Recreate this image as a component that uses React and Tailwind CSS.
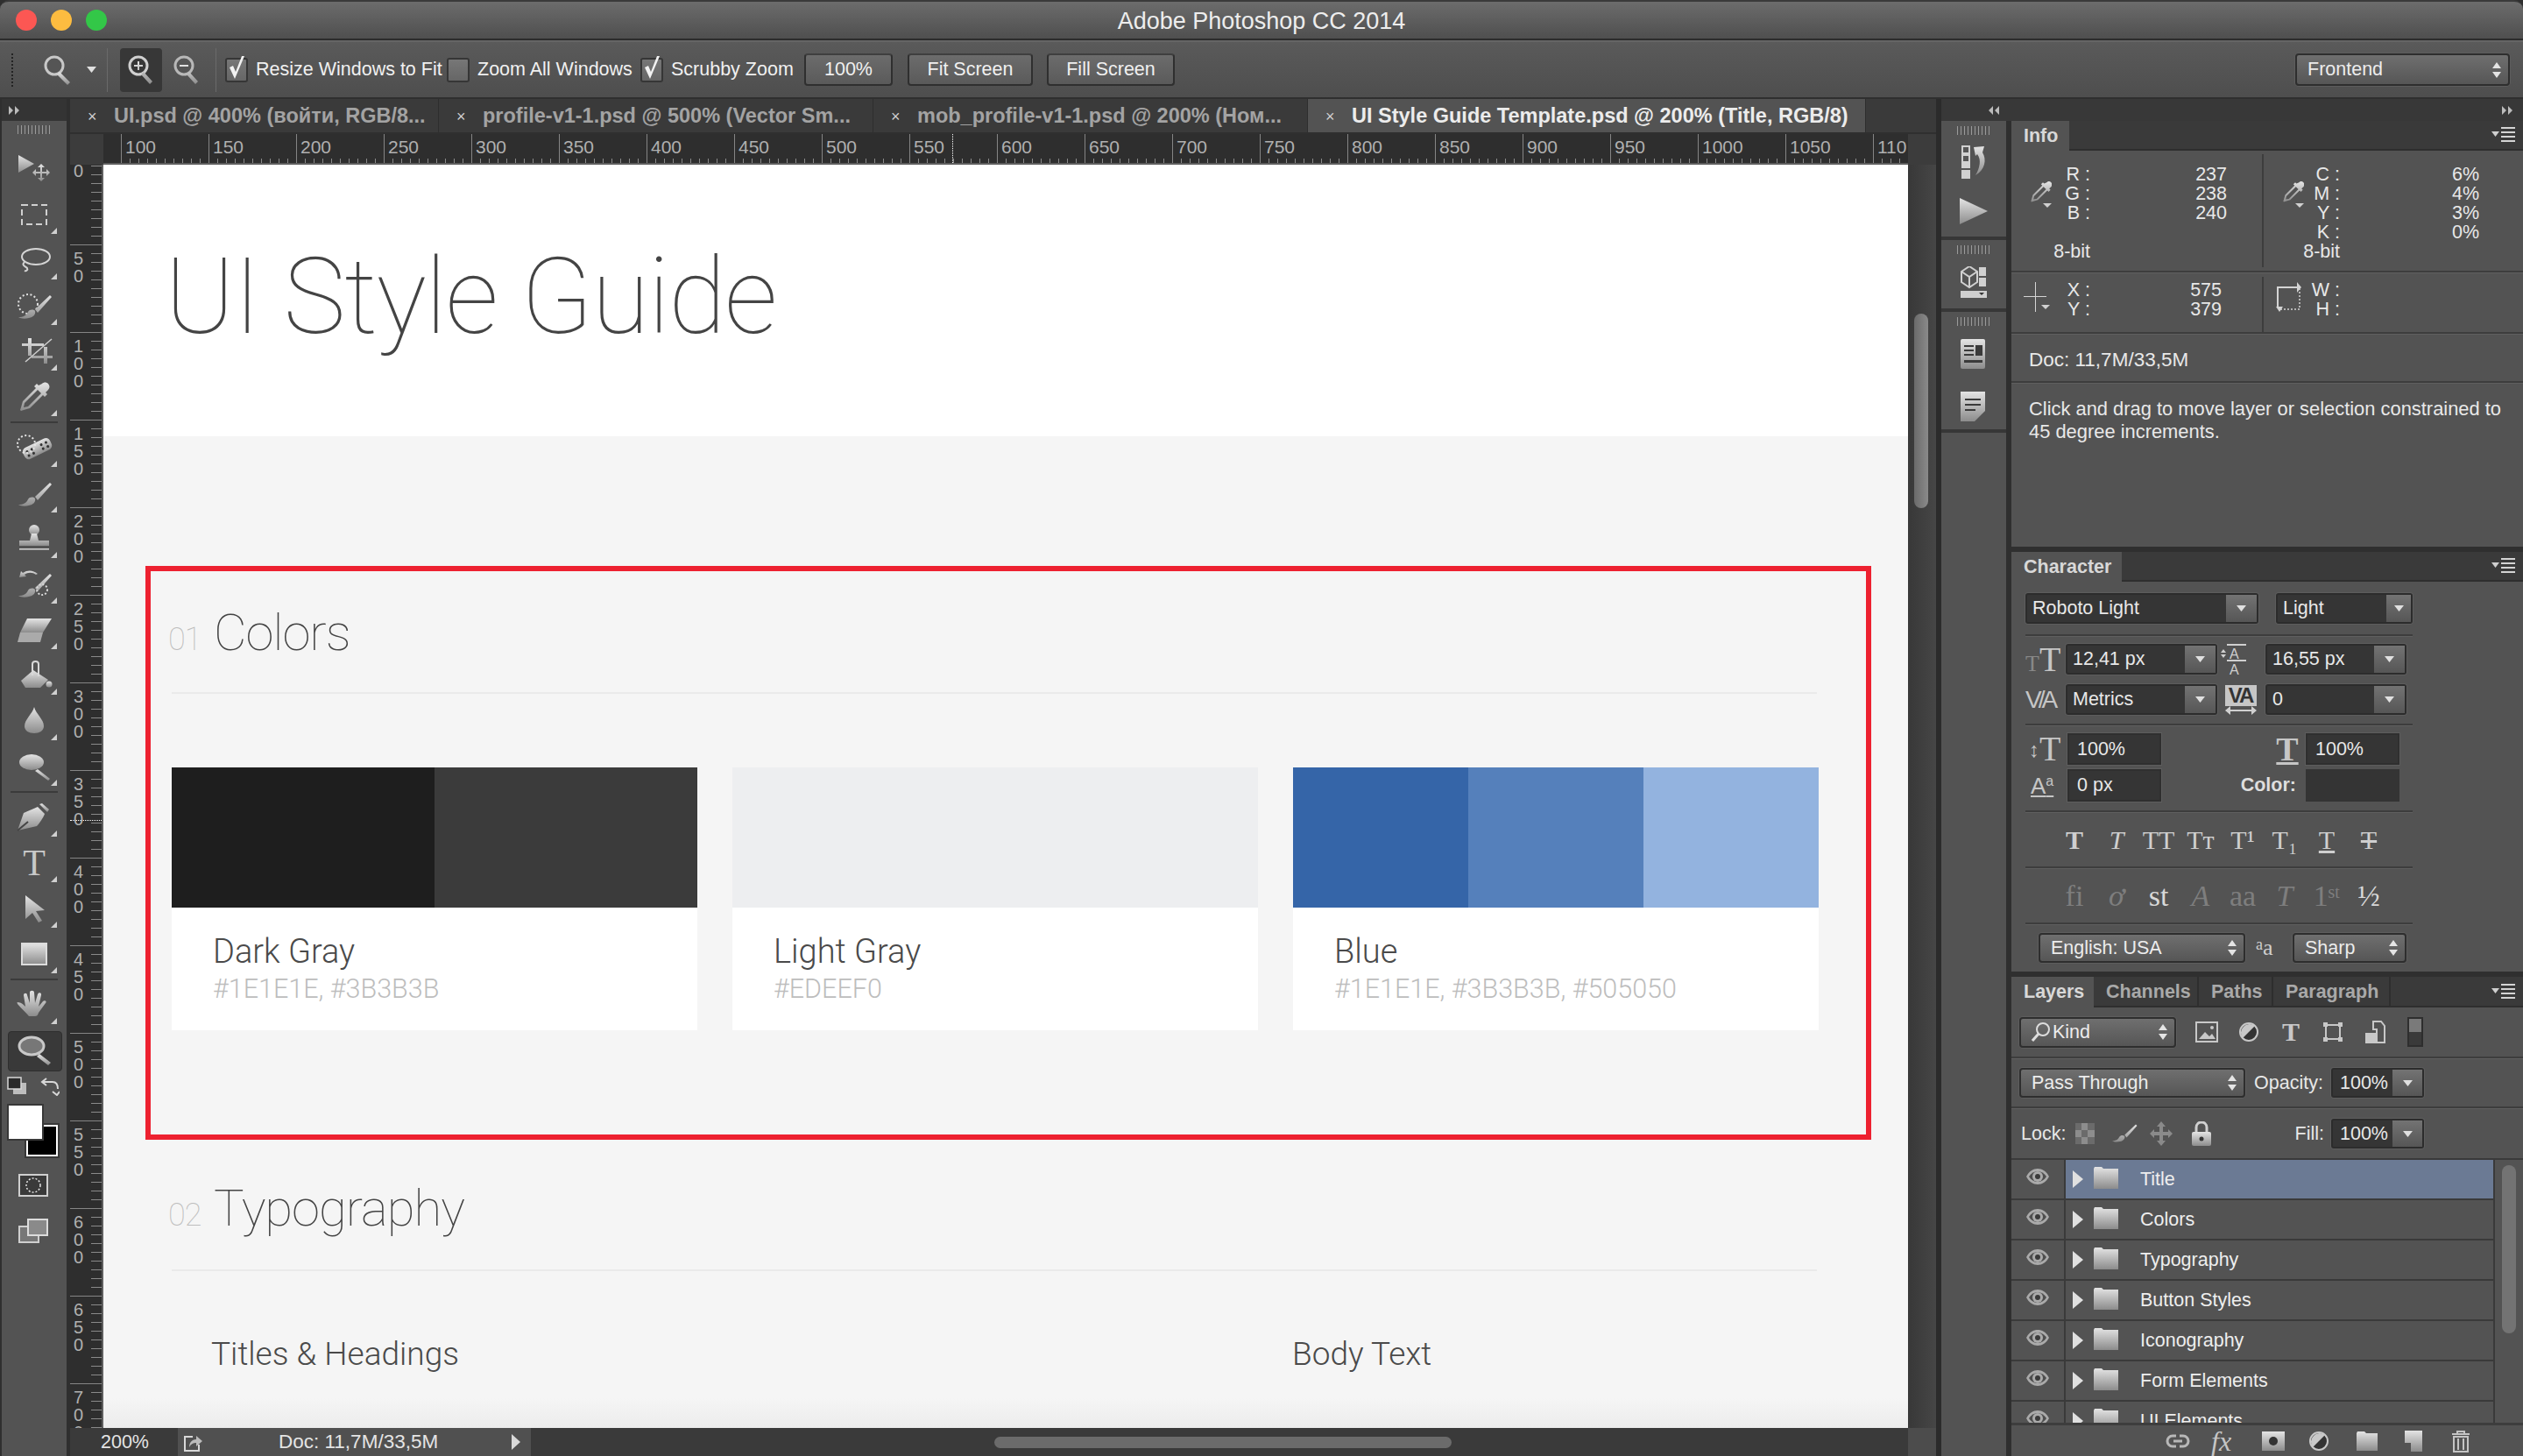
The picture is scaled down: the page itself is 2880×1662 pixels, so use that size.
const ui = "font-['Liberation_Sans',Arial,sans-serif]";
const thin = "font-['Roboto','Liberation_Sans',sans-serif] font-thin";
const light = "font-['Roboto','Liberation_Sans',sans-serif] font-light";

const Caret = ({ className = '' }) => (
  <svg width="11" height="7" viewBox="0 0 11 7" className={className}><path d="M0 0h11L5.500 7z" fill="#e0e0e0" /></svg>
);

const UpDown = () => (
  <svg width="10" height="18" viewBox="0 0 10 18" className="shrink-0"><path d="M5 0l5 7H0zM5 18l5-7H0z" fill="#e4e4e4" /></svg>
);

const Line = ({ className = '' }) => <div className={`h-[3px] shrink-0 border-t-2 border-[#3d3d3d] border-b border-b-[#5f5f5f] ${className}`} />;

// dark field with the small gray dropdown on its right
const Combo = ({ w, drop = 35, h = 'h-[35px]', text, pl = 'pl-[6px]' }) => (
  <div className={`${h} flex shrink-0 border-2 border-[#2c2c2c] rounded-[3px] bg-[#353535] shadow-[0_0_0_1px_#5d5d5d]`} style={{ width: w }}>
    <div className={`flex-1 flex items-center ${pl} text-[21.500px] text-[#e8e8e8]`}>{text}</div>
    <div className="flex items-center justify-center bg-linear-to-b from-[#737373] to-[#565656]" style={{ width: drop }}><Caret /></div>
  </div>
);

const Field = ({ text, w = 107, h = 'h-[36px]' }) => (
  <div className={`${h} shrink-0 flex items-center pl-[9px] bg-[#353535] border-2 border-[#2f2f2f] text-[21.500px] text-[#e8e8e8] shadow-[0_0_0_1px_#5d5d5d]`} style={{ width: w }}>{text}</div>
);

const Picker = ({ w, children, h = 'h-[34px]' }) => (
  <div className={`${h} flex items-center justify-between shrink-0 pl-[12px] pr-[8px] rounded-[4px] border-2 border-[#2e2e2e] bg-linear-to-b from-[#6f6f6f] to-[#565656] text-[21.500px] text-[#ececec] shadow-[0_0_0_1px_#5d5d5d]`} style={{ width: w }}>
    {children}
    <UpDown />
  </div>
);

const PanelMenu = () => (
  <svg width="28" height="20" viewBox="0 0 28 20" className="ml-auto mr-[8px] shrink-0">
    <path d="M0 6h9L4.500 12z" fill="#cfcfcf" />
    <path d="M11 1h16v2H11zM11 6h16v2H11zM11 11h16v2H11zM11 16h16v2H11z" fill="#d4d4d4" />
  </svg>
);

const Ic = ({ w = 44, h = 36, children, className = '' }) => (
  <svg width={w} height={h} viewBox={`0 0 ${w} ${h}`} className={`shrink-0 ${className}`} fill="url(#ig)">{children}</svg>
);

const brush = 'M4 31c6 0 9-2 11-6 2-3 6-3 8-1 1 4-2 7-7 8-4 1-9 1-12-1zM23 22L40 6l2 2-16 18z';
const dropper = 'M31 3c2-2 5-2 7 0s2 5 0 7l-3 3 2 2-3 3-2-2L17 31l-7 2-3 1-1-1 1-3 2-7L24 8l-2-2 3-3 2 2zM26 10L11 25l-1 5 5-1 15-15z';

const toolIcons = {
  move: <Ic><path d="M4 2v20l18-10z" /><path d="M30 12l4 4h-3v5h5v-3l4 4-4 4v-3h-5v5h3l-4 4-4-4h3v-5h-5v3l-4-4 4-4v3h5v-5h-3z" /></Ic>,
  marquee: <Ic><rect x="8" y="7" width="28" height="22" fill="none" stroke="#d0d0d0" strokeWidth="2" strokeDasharray="7 4" /></Ic>,
  lasso: <Ic><ellipse cx="24" cy="14" rx="16" ry="9" fill="none" stroke="#d4d4d4" strokeWidth="2" /><path d="M11 20c-4 4 1 5 3 7 1 2-1 4-3 3" fill="none" stroke="#d4d4d4" strokeWidth="2" /></Ic>,
  quick: <Ic><circle cx="15" cy="16" r="11" fill="none" stroke="#e0e0e0" strokeWidth="2" strokeDasharray="2 2.500" /><path d={brush} /></Ic>,
  crop: <Ic><path d="M8 9h7V3h4v6h14v3h-14v11h-4V12H8zM19 23h14V13h4v10h6v3h-6v6h-4v-6H19z" /><path d="M12 30L42 4" stroke="#cfcfcf" strokeWidth="1.500" /></Ic>,
  dropper: <Ic><path d={dropper} fillRule="evenodd" /></Ic>,
  heal: <Ic><g transform="rotate(-26 26 20)"><rect x="9" y="12" width="34" height="14" rx="5" /><circle cx="14" cy="17" r="1.500" fill="#333" /><circle cx="14" cy="22" r="1.500" fill="#333" /><circle cx="20" cy="17" r="1.500" fill="#333" /><circle cx="20" cy="22" r="1.500" fill="#333" /><circle cx="32" cy="17" r="1.500" fill="#333" /><circle cx="32" cy="22" r="1.500" fill="#333" /><circle cx="38" cy="17" r="1.500" fill="#333" /><circle cx="38" cy="22" r="1.500" fill="#333" /></g><circle cx="13" cy="14" r="10" fill="none" stroke="#e4e4e4" strokeWidth="2" strokeDasharray="2 2.500" /></Ic>,
  brush: <Ic><path d={brush} /></Ic>,
  stamp: <Ic><circle cx="22" cy="8" r="6" /><path d="M19 12h6l2 8h12v6H5v-6h12z" /><path d="M5 29h34v2H5z" /></Ic>,
  history: <Ic><path d={brush} /><path d="M24 7c-4-3-9-3-13 0l2 2-8 1 2-7 2 2c6-4 12-3 17 1z" /><circle cx="31" cy="24" r="6" fill="none" stroke="#d8d8d8" strokeDasharray="2 2" strokeWidth="2" /></Ic>,
  eraser: <Ic><path d="M14 5h28l-10 16H6z" /><path d="M6 21h26l-3 11H3z" fill="#aaa" /></Ic>,
  bucket: <Ic><path d="M7 24L21 12l17 11-9 9H12z" /><path d="M20 18V5c0-4 7-4 7 0v14" fill="none" stroke="#d8d8d8" strokeWidth="2" /><circle cx="39" cy="28" r="3.500" /></Ic>,
  blur: <Ic><path d="M22 2c2 8 11 14 11 22 0 5-5 8-11 8s-11-3-11-8c0-8 9-14 11-22z" /></Ic>,
  dodge: <Ic><ellipse cx="19" cy="13" rx="14" ry="9" /><path d="M26 21l14 11-2 2-15-11z" /></Ic>,
  pen: <Ic><path d="M3 33L10 13c5-2 11-5 16-7l8 8c-2 5-6 11-9 14z" /><path d="M3 33l12-10" stroke="#444" strokeWidth="2" /><path d="M28 3l3-1 8 7-2 3z" /></Ic>,
  type: <span className="font-['Liberation_Serif',serif] text-[42px] leading-none text-[#c8c8c8]">T</span>,
  select: <Ic><path d="M12 3l22 17-10 1 7 11-4 2-7-11-8 7z" /></Ic>,
  shape: <Ic><rect x="8" y="6" width="28" height="24" stroke="#dcdcdc" strokeWidth="2" /></Ic>,
  hand: <Ic><path d="M3 15c4 0 7 3 9 5L10 7c0-3 4-3 4 0l3 9V4c0-3 5-3 5 0l1 12 3-10c1-3 5-2 4 1l-3 13 5-6c2-2 5 0 3 2l-8 11c-1 3-2 4-4 4H16c-3-4-8-8-13-14-1-2 0-2 0-2z" /></Ic>,
  zoom: <Ic><ellipse cx="19" cy="13" rx="14" ry="10" fill="#777" stroke="#c8c8c8" strokeWidth="3" /><path d="M28 22l13 10-3 3-13-10z" /></Ic>,
};

const Tool = ({ name, corner = true, active = false }) => (
  <div className="h-[52px] relative flex items-center justify-center">
    {active && <div className="absolute left-[7px] right-[5px] top-[4px] bottom-[2px] rounded-[4px] bg-[#393939] border border-[#2f2f2f]" />}
    <div className="relative flex">{toolIcons[name]}</div>
    {corner && <div className="absolute right-[11px] bottom-[4px] w-0 h-0 border-l-[7px] border-l-transparent border-b-[7px] border-b-[#d0d0d0]" />}
  </div>
);

const ToolSep = () => <div className="h-[2px] my-[2px] mx-[10px] bg-[#3b3b3b]" />;

const Grip = ({ className = '' }) => (
  <div className={`h-[10px] w-[38px] mx-auto bg-[repeating-linear-gradient(90deg,#9a9a9a_0,#9a9a9a_1px,transparent_1px,transparent_4px)] ${className}`} />
);

const Tools = () => (
  <div className="w-[80px] h-full shrink-0 flex flex-col border-l-2 border-[#2f2f2f] border-r-4 border-r-[#2f2f2f] bg-[#535353]">
    <div className="h-[25px] shrink-0 bg-[#343434] flex items-center pl-[8px]">
      <svg width="14" height="10" viewBox="0 0 14 10"><path d="M0 0l5 5-5 5zM7 0l5 5-5 5z" fill="#bcbcbc" /></svg>
    </div>
    <div className="h-[29px] shrink-0 pt-[5px]"><Grip className="w-[34px]" /></div>
    {['move', 'marquee', 'lasso', 'quick', 'crop', 'dropper'].map((t) => <Tool key={t} name={t} corner={t !== 'move'} />)}
    <ToolSep />
    {['heal', 'brush', 'stamp', 'history', 'eraser', 'bucket', 'blur', 'dodge'].map((t) => <Tool key={t} name={t} />)}
    <ToolSep />
    {['pen', 'type', 'select', 'shape'].map((t) => <Tool key={t} name={t} />)}
    <ToolSep />
    <Tool name="hand" />
    <Tool name="zoom" corner={false} active />
    <div className="h-[37px] shrink-0 flex justify-between items-start pt-[4px] pl-[6px] pr-[8px]">
      <svg width="22" height="22" viewBox="0 0 22 22"><rect x="7" y="7" width="15" height="13" fill="#bdbdbd" /><rect x="1" y="1" width="15" height="13" fill="#2a2a2a" stroke="#d8d8d8" strokeWidth="1.500" /></svg>
      <svg width="22" height="22" viewBox="0 0 22 22" fill="none" stroke="#d8d8d8" strokeWidth="2"><path d="M7 2L2 6l5 4M2 6h12c4 0 6 3 6 8M14 17l5 4 3-4" /></svg>
    </div>
    <div className="relative h-[60px] shrink-0 ml-[8px]">
      <div className="absolute left-[20px] top-[22px] w-[36px] h-[36px] bg-black border-2 border-white shadow-[0_0_0_2px_#383838]" />
      <div className="absolute left-0 top-0 w-[38px] h-[38px] bg-white shadow-[0_0_0_2px_#383838]" />
    </div>
    <div className="flex justify-center mt-[18px] ml-[-2px]">
      <svg width="34" height="26" viewBox="0 0 34 26"><rect x="1" y="1" width="32" height="24" fill="#3a3a3a" stroke="#cfcfcf" strokeWidth="2" /><circle cx="17" cy="13" r="8" fill="none" stroke="#e8e8e8" strokeWidth="1.500" strokeDasharray="2 2" /></svg>
    </div>
    <div className="flex justify-center mt-[25px] ml-[-2px] relative">
      <svg width="34" height="28" viewBox="0 0 34 28"><rect x="1" y="9" width="22" height="18" fill="#777" stroke="#cfcfcf" strokeWidth="2" /><rect x="11" y="1" width="22" height="18" fill="#8a8a8a" stroke="#dcdcdc" strokeWidth="2" /></svg>
    </div>
  </div>
);

const HRuler = () => {
  const labels = [];
  for (let i = 100; i <= 1100; i += 50) labels.push(i);
  return (
    <div className="h-[35px] shrink-0 flex bg-[#2e2e2e]">
      <div className="w-[38px] shrink-0 bg-[#3c3c3c]" />
      <div className="relative w-[2060px] flex overflow-hidden pl-[20px] border-b-2 border-[#5e5e5e]">
        {labels.map((n) => (
          <div key={n} className="w-[100px] shrink-0 border-l border-[#858585] flex flex-col">
            <span className="pl-[4px] text-[21px] leading-[29px] text-[#b0b0b0] h-[27px]">{n === 1100 ? '110' : n}</span>
            <div className="mt-auto h-[5px] bg-[repeating-linear-gradient(90deg,transparent_0,transparent_9px,#8a8a8a_9px,#8a8a8a_10px)]" />
          </div>
        ))}
        <div className="absolute left-[969px] top-0 bottom-0 border-l border-dotted border-white" />
      </div>
      <div className="w-[32px] shrink-0 bg-[#3c3c3c]" />
    </div>
  );
};

const VRuler = () => {
  const labels = [];
  for (let i = 0; i <= 700; i += 50) labels.push(i);
  return (
    <div className="relative w-[38px] shrink-0 h-full overflow-hidden bg-[#2e2e2e] border-r-2 border-[#5e5e5e]">
      <div className="flex flex-col -mt-[9px]">
        {labels.map((n) => (
          <div key={n} className="h-[100px] shrink-0 border-t border-[#858585] flex">
            <div className="w-[24px] pl-[4px] pt-[5px] flex flex-col text-[20px] leading-[20px] text-[#b0b0b0]">
              {String(n).split('').map((d, i) => <span key={i}>{d}</span>)}
            </div>
            <div className="w-[12px] bg-[repeating-linear-gradient(180deg,transparent_0,transparent_9px,#8a8a8a_9px,#8a8a8a_10px)]" />
          </div>
        ))}
      </div>
      <div className="absolute left-0 right-0 top-[748px] border-t border-dotted border-white" />
    </div>
  );
};

const SectionHead = ({ num, title }) => (
  <div className="flex items-baseline -ml-[4px]">
    <span className={`w-[52px] text-[36px] leading-[60px] text-[#bdbdbd] tracking-[-1px] ${thin}`}>{num}</span>
    <span className={`text-[58px] leading-[60px] text-[#444] tracking-[-1px] ${thin}`}>{title}</span>
  </div>
);

const Card = ({ swatches, name, codes }) => (
  <div className="w-[600px] shrink-0 bg-white">
    <div className="h-[160px] flex">
      {swatches.map((c) => <div key={c} className="flex-1" style={{ backgroundColor: c }} />)}
    </div>
    <div className="h-[140px] pl-[47px] pt-[28px]">
      <div className={`text-[38px] leading-[44px] text-[#4a4a4a] ${light}`}>{name}</div>
      <div className={`text-[30.500px] leading-[36px] mt-[3px] text-[#bdbdbd] ${light}`}>{codes}</div>
    </div>
  </div>
);

const Canvas = () => (
  <div className="flex-1 h-full overflow-hidden bg-[#f5f5f5] relative">
    <div className="h-[310px] bg-white pl-[70px] pt-[86px]">
      <h1 className={`text-[120px] leading-[130px] tracking-[-1.500px] text-[#444] ${thin}`}>UI Style Guide</h1>
    </div>
    <div className="ml-[48px] mt-[148px] w-[1970px] h-[655px] border-[6px] border-[#ed2130] pl-[24px]">
      <div className="pt-[40px] h-[138px]"><SectionHead num="01" title="Colors" /></div>
      <div className="h-[2px] w-[1878px] bg-[#eaeaea]" />
      <div className="mt-[84px] flex gap-[40px]">
        <Card swatches={['#1e1e1e', '#3b3b3b']} name="Dark Gray" codes="#1E1E1E, #3B3B3B" />
        <Card swatches={['#edeef0']} name="Light Gray" codes="#EDEEF0" />
        <Card swatches={['#3565a8', '#5580bb', '#93b3df']} name="Blue" codes="#1E1E1E, #3B3B3B, #505050" />
      </div>
    </div>
    <div className="ml-[78px] mt-[48px]">
      <SectionHead num="02" title="Typography" />
      <div className="mt-[32px] h-[2px] w-[1878px] bg-[#eaeaea]" />
      <div className={`mt-[70px] flex text-[37px] leading-[50px] text-[#4a4a4a] ${light}`}>
        <span className="w-[1279px] pl-[45px]">Titles &amp; Headings</span>
        <span>Body Text</span>
      </div>
    </div>
    <div className="absolute left-0 right-0 bottom-0 h-[34px] bg-linear-to-b from-transparent to-[#ececec]" />
  </div>
);

const tabs = [
  { label: 'UI.psd @ 400% (войти, RGB/8...', w: 421 },
  { label: 'profile-v1-1.psd @ 500% (Vector Sm...', w: 496 },
  { label: 'mob_profile-v1-1.psd @ 200% (Ном...', w: 496 },
  { label: 'UI Style Guide Template.psd @ 200% (Title, RGB/8)', w: 637, active: true },
];

const Center = () => (
  <div className="w-[2130px] h-full shrink-0 flex flex-col">
    <div className="h-[40px] shrink-0 flex bg-[#3a3a3a] border-b-2 border-[#2f2f2f]">
      {tabs.map((t) => (
        <div key={t.label} className={`shrink-0 flex items-center pl-[20px] pt-[2px] border-r border-[#2e2e2e] font-bold text-[23.500px] ${t.active ? 'bg-[#535353] text-[#ececec]' : 'text-[#a3a3a3]'}`} style={{ width: t.w }}>
          <span className="w-[30px] text-[18px] font-normal text-[#d0d0d0]">×</span>
          <span className="whitespace-nowrap">{t.label}</span>
        </div>
      ))}
    </div>
    <HRuler />
    <div className="h-[1442px] shrink-0 flex">
      <VRuler />
      <Canvas />
      <div className="w-[32px] shrink-0 h-full pt-[170px] bg-linear-to-r from-[#383838] to-[#464646]">
        <div className="ml-[7px] w-[16px] h-[222px] rounded-full bg-linear-to-r from-[#6a6a6a] to-[#8a8a8a]" />
      </div>
    </div>
    <div className="h-[32px] shrink-0 flex items-center bg-[#3a3a3a] text-[21.500px] text-[#e4e4e4]">
      <span className="w-[123px] pl-[35px]">200%</span>
      <div className="w-[403px] h-full flex items-center bg-[#505050] pl-[5px]">
        <svg width="24" height="24" viewBox="0 0 24 24"><path d="M2 5h10v2H4v14h14v-6h2v8H2z" fill="#d8d8d8" /><path d="M8 18c0-6 4-9 8-9V5l7 6-7 6v-4c-3 0-6 1-8 5z" fill="#bbb" /></svg>
        <span className="ml-[86px] text-[22.500px]">Doc: 11,7M/33,5M</span>
        <svg width="10" height="18" viewBox="0 0 10 18" className="ml-auto mr-[12px]"><path d="M0 0l10 9-10 9z" fill="#d8d8d8" /></svg>
      </div>
      <div className="ml-[529px] w-[522px] h-[13px] rounded-full bg-[#6b6b6b]" />
      <div className="ml-auto w-[32px] h-full bg-[#4c4c4c]" />
    </div>
  </div>
);

const Dock = () => (
  <div className="w-[74px] h-full shrink-0 flex flex-col bg-[#535353]">
    <div className="h-[136px] shrink-0 border-b-4 border-[#373737] pt-[6px] flex flex-col items-center">
      <Grip />
      <svg width="34" height="38" viewBox="0 0 34 38" className="mt-[12px]">
        <path d="M3 0h10v26H3zM3 28h10v10H3z" fill="#d0d0d0" /><path d="M5 2h6v6H5zM5 12h6v6H5z" fill="#555" />
        <path d="M17 2l12-1-2 7c5 8 3 20-8 26 5-8 7-18 2-24l-2 2z" fill="url(#ig)" />
      </svg>
      <svg width="32" height="30" viewBox="0 0 32 30" className="mt-[22px]"><path d="M0 0l32 15L0 30z" fill="url(#ig)" /></svg>
    </div>
    <div className="h-[82px] shrink-0 border-b-4 border-[#373737] pt-[6px] flex flex-col items-center">
      <Grip />
      <svg width="32" height="36" viewBox="0 0 32 36" className="mt-[14px]">
        <path d="M2 6l9-6 9 6v12l-9 6-9-6z" fill="none" stroke="#d0d0d0" strokeWidth="2" /><path d="M2 6l9 6 9-6M11 12v12" stroke="#d0d0d0" strokeWidth="2" fill="none" />
        <path d="M22 1h8v10h-8zM22 13h8v10h-8z" fill="#d0d0d0" /><path d="M1 28h30v8H1z" fill="#cfcfcf" /><path d="M22 30h6l-3 3z" fill="#333" />
      </svg>
    </div>
    <div className="h-[138px] shrink-0 border-b-4 border-[#373737] pt-[6px] flex flex-col items-center">
      <Grip />
      <svg width="30" height="34" viewBox="0 0 30 34" className="mt-[15px]">
        <rect width="28" height="34" rx="2" fill="url(#ig)" /><path d="M4 7h11v2H4zM4 12h11v2H4zM4 17h11v2H4zM17 7h8v12h-8zM4 24h21v3H4z" fill="#3a3a3a" />
      </svg>
      <svg width="30" height="34" viewBox="0 0 30 34" className="mt-[26px]">
        <path d="M0 0h28v22l-12 12H0z" fill="url(#ig)" /><path d="M5 8h18v2H5zM5 14h18v2H5zM5 20h12v2H5z" fill="#3a3a3a" />
      </svg>
    </div>
  </div>
);

const InfoRows = ({ labels, values, labelW, valueW, bit, children }) => (
  <div className="flex-1 flex flex-col relative">
    <div className="flex h-[88px]">
      <div className="text-right" style={{ width: labelW }}>{labels.map((l) => <div key={l}>{l}</div>)}</div>
      <div className="text-right" style={{ width: valueW }}>{values.map((l) => <div key={l}>{l}</div>)}</div>
    </div>
    {bit && <div className="text-right" style={{ width: labelW }}>8-bit</div>}
    {children}
  </div>
);

const InfoDropper = () => (
  <Ic w={28} h={36} className="absolute left-[18px] top-[18px]"><g transform="scale(.72)"><path d={dropper} fillRule="evenodd" /></g><path d="M18 26h10l-5 5z" fill="#d0d0d0" /></Ic>
);

const InfoPanel = () => (
  <div className="h-[486px] shrink-0 flex flex-col text-[21.500px] leading-[22px] text-[#e8e8e8]">
    <div className="h-[34px] shrink-0 flex items-center bg-[#3a3a3a] border-b-2 border-[#2e2e2e]">
      <div className="w-[66px] h-[34px] -mb-[2px] bg-[#535353] pl-[14px] leading-[34px] font-bold text-[#d8d8d8]">Info</div>
      <PanelMenu />
    </div>
    <div className="h-[137px] shrink-0 flex pt-[16px]">
      <div className="w-[288px] border-r-2 border-[#3d3d3d] -mt-[12px] pt-[12px] mb-[4px] flex">
        <InfoRows labels={['R :', 'G :', 'B :']} values={['237', '238', '240']} labelW={90} valueW={156} bit><InfoDropper /></InfoRows>
      </div>
      <InfoRows labels={['C :', 'M :', 'Y :', 'K :']} values={['6%', '4%', '3%', '0%']} labelW={87} valueW={159} bit><InfoDropper /></InfoRows>
    </div>
    <Line />
    <div className="h-[67px] shrink-0 flex pt-[8px]">
      <div className="w-[288px] -mt-[4px] pt-[4px] border-r-2 border-[#3d3d3d] flex">
        <InfoRows labels={['X :', 'Y :']} values={['575', '379']} labelW={90} valueW={150}>
          <svg width="32" height="36" viewBox="0 0 32 36" className="absolute left-[14px] top-[2px]"><path d="M13 0h1v34h-1zM0 16h26v1H0z" fill="#d4d4d4" /><path d="M20 26h10l-5 5z" fill="#d0d0d0" /></svg>
        </InfoRows>
      </div>
      <InfoRows labels={['W :', 'H :']} values={[]} labelW={87} valueW={0}>
        <svg width="30" height="36" viewBox="0 0 30 36" fill="none" className="absolute left-[14px] top-[2px]"><path d="M2 30V6h26" stroke="#d4d4d4" strokeWidth="2" /><path d="M5 31h22V8" stroke="#d4d4d4" strokeWidth="1.500" strokeDasharray="2 2" /><path d="M24 0l5 6-5 6zM0 28h8l-4 6z" fill="#d4d4d4" /></svg>
      </InfoRows>
    </div>
    <Line />
    <div className="h-[53px] shrink-0 flex items-center pl-[20px] pt-[4px] text-[22.500px]">Doc: 11,7M/33,5M</div>
    <Line />
    <div className="pl-[20px] pt-[16px] leading-[26px] w-[566px] text-[21.900px]">Click and drag to move layer or selection constrained to 45 degree increments.</div>
  </div>
);

const fmt = "font-['Liberation_Serif',serif] leading-none";
const formatRow = [
  ['T', 'font-bold'], ['T', 'italic'], ['TT', ''], ['Tт', ''], ['T¹', ''], ['T₁', ''], ['T', 'underline'], ['T', 'line-through'],
];
const openType = [
  ['fi', '', false], ['ơ', 'italic', false], ['st', '', true], ['A', 'italic', false], ['aa', '', false], ['T', 'italic', false], ['1ˢᵗ', '', false], ['½', '', true],
];

const CharPanel = () => (
  <div className="h-[485px] shrink-0 flex flex-col border-t-[6px] border-[#2f2f2f] text-[21.500px] text-[#e8e8e8]">
    <div className="h-[34px] shrink-0 flex items-center bg-[#3a3a3a] border-b-2 border-[#2e2e2e]">
      <div className="w-[126px] h-[34px] -mb-[2px] bg-[#535353] pl-[14px] leading-[34px] font-bold text-[#d8d8d8]">Character</div>
      <PanelMenu />
    </div>
    <div className="ml-[16px] w-[442px] flex flex-col">
      <div className="mt-[13px] flex gap-[20px]">
        <Combo w={266} drop={35} text="Roboto Light" />
        <Combo w={156} drop={28} text="Light" />
      </div>
      <Line className="mt-[12px]" />
      <div className="mt-[8px] h-[35px] flex items-center">
        <div className="w-[46px] font-['Liberation_Serif',serif] text-[#c6c6c6] text-[40px] leading-none"><span className="text-[26px] text-[#888]">T</span>T</div>
        <Combo w={173} text="12,41 px" />
        <div className="w-[55px] pl-[4px]">
          <svg width="30" height="36" viewBox="0 0 30 36" fill="none"><path d="M7 1h22M7 19h22" stroke="#cfcfcf" strokeWidth="2" /><path d="M3 6l3 4H0zM3 16l3-4H0z" fill="#cfcfcf" /><text x="10" y="17" fontSize="16" fill="#cfcfcf">A</text><text x="10" y="35" fontSize="16" fill="#cfcfcf">A</text></svg>
        </div>
        <Combo w={161} text="16,55 px" />
      </div>
      <div className="mt-[11px] h-[35px] flex items-center">
        <div className="w-[46px] text-[#c6c6c6] text-[28px] leading-none tracking-[-4px]">V/A</div>
        <Combo w={173} text="Metrics" />
        <div className="w-[55px] pl-[2px] flex flex-col items-center pr-[4px]">
          <div className="w-[36px] h-[24px] bg-[#c6c6c6] text-[#333] font-bold text-[24px] leading-[24px] tracking-[-2px] text-center">VA</div>
          <svg width="36" height="10" viewBox="0 0 36 10"><path d="M0 5l6-5v4h24V0l6 5-6 5V6H6v4z" fill="#d0d0d0" /></svg>
        </div>
        <Combo w={161} text="0" />
      </div>
      <Line className="mt-[10px]" />
      <div className="mt-[8px] h-[36px] flex items-center">
        <div className="w-[48px] flex items-center pl-[4px] text-[#c6c6c6] font-['Liberation_Serif',serif] text-[40px] leading-none"><span className="text-[24px] font-sans">↕</span>T</div>
        <Field text="100%" />
        <div className="w-[123px]" />
        <div className="w-[42px] text-center text-[#c6c6c6] font-['Liberation_Serif',serif] font-bold text-[38px] leading-none underline">T</div>
        <Field text="100%" />
      </div>
      <div className="mt-[5px] h-[37px] flex items-center">
        <div className="w-[48px] pl-[6px] text-[#c6c6c6] text-[26px] leading-none underline">A<span className="text-[16px] align-top">a</span></div>
        <Field text="0 px" h="h-[37px]" />
        <div className="w-[165px] pr-[11px] text-right font-bold text-[#dedede]">Color:</div>
        <div className="w-[107px] h-[37px] bg-[#343434]" />
      </div>
      <Line className="mt-[10px]" />
      <div className="h-[61px] shrink-0 flex items-center pl-[32px] text-[#cfcfcf] text-[30px]">
        {formatRow.map(([t, c], i) => <div key={i} className={`w-[48px] text-center ${fmt} ${c}`}>{t}</div>)}
      </div>
      <Line />
      <div className="h-[61px] shrink-0 flex items-center pl-[32px] text-[34px]">
        {openType.map(([t, c, on], i) => <div key={i} className={`w-[48px] text-center ${fmt} ${c} ${on ? 'text-[#d8d8d8]' : 'text-[#7e7e7e]'}`}>{t}</div>)}
      </div>
      <Line />
      <div className="mt-[9px] ml-[15px] h-[34px] flex items-center">
        <Picker w={236}>English: USA</Picker>
        <div className="w-[54px] pl-[12px] text-[#cfcfcf] text-[26px] leading-none font-['Liberation_Serif',serif]"><span className="text-[18px] align-top">a</span>a</div>
        <Picker w={130}>Sharp</Picker>
      </div>
    </div>
  </div>
);

const layers = ['Title', 'Colors', 'Typography', 'Button Styles', 'Iconography', 'Form Elements', 'UI Elements'];

const LayerRow = ({ name, selected }) => (
  <div className="h-[46px] shrink-0 flex border-b-2 border-[#3a3a3a]">
    <div className="w-[62px] shrink-0 flex items-start justify-center pt-[10px] border-r-2 border-[#3a3a3a]">
      <svg width="26" height="18" viewBox="0 0 26 18"><path d="M0 9c6-12 20-12 26 0-6 12-20 12-26 0z" fill="#aaa" /><path d="M3 9c5-8 15-8 20 0-5 8-15 8-20 0z" fill="#4e4e4e" /><circle cx="13" cy="9" r="6" fill="#aaa" /><circle cx="13" cy="9" r="3" fill="#3a3a3a" /></svg>
    </div>
    <div className={`flex-1 flex items-center pl-[8px] ${selected ? 'bg-[#6b7a94]' : ''}`}>
      <svg width="12" height="20" viewBox="0 0 12 20"><path d="M0 0l12 10L0 20z" fill="#e0e0e0" /></svg>
      <svg width="28" height="25" viewBox="0 0 28 25" className="ml-[12px] -mt-[4px]"><path d="M0 2l1-2h8l2 2h17v23H0z" fill="url(#ig)" /></svg>
      <span className="ml-[25px] text-[#eee]">{name}</span>
    </div>
  </div>
);

const LayersPanel = () => (
  <div className="flex-1 min-h-0 flex flex-col border-t-[6px] border-[#2f2f2f] text-[21.500px] text-[#e8e8e8]">
    <div className="h-[35px] shrink-0 flex items-center bg-[#3a3a3a] border-b-2 border-[#2e2e2e] font-bold text-[#a9a9a9]">
      <div className="w-[94px] h-[35px] -mb-[2px] bg-[#535353] pl-[14px] leading-[35px] text-[#d8d8d8]">Layers</div>
      {[['Channels', 120], ['Paths', 85], ['Paragraph', 134]].map(([t, w]) => (
        <div key={t} className="h-full pl-[14px] leading-[34px] border-r-2 border-[#2e2e2e]" style={{ width: w }}>{t}</div>
      ))}
      <PanelMenu />
    </div>
    <div className="h-[56px] shrink-0 flex items-center pl-[9px]">
      <Picker w={179} h="h-[35px]">
        <span className="flex items-center gap-[2px]">
          <svg width="22" height="24" viewBox="0 0 22 24" fill="none" stroke="#ddd" strokeWidth="2"><circle cx="13" cy="9" r="7" /><path d="M8 14l-7 8" strokeWidth="3" /></svg>
          Kind
        </span>
      </Picker>
      <div className="ml-[22px] flex items-center gap-[22px]">
        <svg width="26" height="24" viewBox="0 0 26 24"><rect x="1" y="1" width="24" height="22" fill="none" stroke="#c8c8c8" strokeWidth="2" /><path d="M4 20l7-8 5 5 3-3 4 6z" fill="#c8c8c8" /><circle cx="19" cy="7" r="2" fill="#c8c8c8" /></svg>
        <svg width="26" height="24" viewBox="0 0 24 24"><circle cx="12" cy="12" r="10" fill="#333" stroke="#c8c8c8" strokeWidth="2" /><path d="M5 19L19 5a10 10 0 0 0-14 14z" fill="#c8c8c8" /></svg>
        <span className="w-[26px] text-center font-['Liberation_Serif',serif] font-bold text-[#c8c8c8] text-[30px] leading-none">T</span>
        <svg width="26" height="24" viewBox="0 0 24 24" fill="#c8c8c8"><path d="M4 3h16v2H4zM4 19h16v2H4zM3 4h2v16H3zM19 4h2v16h-2z" /><path d="M1 1h5v5H1zM18 1h5v5h-5zM1 18h5v5H1zM18 18h5v5h-5z" /></svg>
        <svg width="26" height="26" viewBox="0 0 24 26" fill="#c8c8c8"><path d="M10 1h9l4 5v19h-9V10h-4z" fill="none" stroke="#c8c8c8" strokeWidth="2" /><path d="M1 14h12v12H1z" /></svg>
      </div>
      <div className="ml-[24px] w-[18px] h-[34px] border-2 border-[#2e2e2e] bg-linear-to-b from-[#7a7a7a] from-50% to-[#3a3a3a] to-50%" />
    </div>
    <Line />
    <div className="h-[54px] shrink-0 flex items-center pl-[9px]">
      <Picker w={258}>Pass Through</Picker>
      <span className="ml-[10px] w-[88px] whitespace-nowrap">Opacity:</span>
      <Combo w={106} drop={34} h="h-[34px]" text="100%" pl="pl-[8px]" />
    </div>
    <Line />
    <div className="h-[56px] shrink-0 flex items-center pl-[11px]">
      <span className="w-[60px]">Lock:</span>
      <svg width="22" height="24" viewBox="0 0 22 24" className="ml-[2px]"><path d="M0 0h22v24H0z" fill="#8d8d8d" /><path d="M0 0h7v8H0zM14 0h8v8h-8zM7 8h7v8H7zM0 16h7v8H0zM14 16h8v8h-8z" fill="#6b6b6b" /></svg>
      <Ic w={32} h={30} className="ml-[17px]"><g transform="scale(.75)"><path d={brush} /></g></Ic>
      <svg width="26" height="28" viewBox="0 0 26 28" className="ml-[14px]" fill="#8a8a8a"><path d="M13 0l5 6h-3v6h6V9l5 5-5 5v-3h-6v6h3l-5 6-5-6h3v-6H5v3l-5-5 5-5v3h6V6H8z" /></svg>
      <svg width="22" height="28" viewBox="0 0 22 28" className="ml-[22px]"><path d="M5 12V7c0-8 12-8 12 0v5" fill="none" stroke="#d0d0d0" strokeWidth="3" /><rect y="12" width="22" height="16" rx="2" fill="url(#ig)" /><circle cx="11" cy="20" r="2.500" fill="#333" /></svg>
      <span className="ml-auto mr-[8px]">Fill:</span>
      <Combo w={106} drop={34} h="h-[34px]" text="100%" pl="pl-[8px]" />
      <div className="w-[113px] shrink-0" />
    </div>
    <div className="h-[2px] shrink-0 bg-[#3a3a3a]" />
    <div className="h-[300px] shrink-0 flex overflow-hidden">
      <div className="w-[552px] shrink-0 flex flex-col border-r-2 border-[#3a3a3a]">
        {layers.map((l, i) => <LayerRow key={l} name={l} selected={i === 0} />)}
      </div>
      <div className="w-[32px] pt-[6px] pl-[8px]"><div className="w-[16px] h-[192px] rounded-full bg-[#737373]" /></div>
    </div>
    <div className="flex-1 flex items-center border-t-[3px] border-[#3d3d3d]">
      <svg width="28" height="16" viewBox="0 0 28 16" fill="none" stroke="#b8b8b8" strokeWidth="3" className="ml-[176px]"><path d="M12 2H8a6 6 0 0 0 0 12h4M16 2h4a6 6 0 0 1 0 12h-4M9 8h10" /></svg>
      <span className="ml-[24px] w-[32px] font-['Liberation_Serif',serif] italic text-[32px] leading-none text-[#c6c6c6]">fx</span>
      <svg width="26" height="22" viewBox="0 0 26 22" className="ml-[26px]"><path d="M0 0h26v22H0z" fill="url(#ig)" /><circle cx="13" cy="11" r="5" fill="#333" /></svg>
      <svg width="24" height="24" viewBox="0 0 24 24" className="ml-[27px]"><circle cx="12" cy="12" r="10" fill="#333" stroke="#c8c8c8" strokeWidth="2" /><path d="M5 19L19 5a10 10 0 0 0-14 14z" fill="#c8c8c8" /></svg>
      <svg width="24" height="22" viewBox="0 0 24 22" className="ml-[31px]"><path d="M0 2l1-2h8l2 2h13v20H0z" fill="url(#ig)" /></svg>
      <svg width="22" height="24" viewBox="0 0 22 24" className="ml-[31px]"><path d="M0 0h20v24H7V14H0z" fill="url(#ig)" /></svg>
      <svg width="22" height="26" viewBox="0 0 22 26" className="ml-[31px]" fill="none" stroke="#c4c4c4" strokeWidth="2"><path d="M1 5h20M7 5V2h8v3M3 8h16v17H3zM8 10v13M14 10v13" /></svg>
    </div>
  </div>
);

const Check = ({ on }) => (
  <div className="relative w-[26px] h-[28px] shrink-0 rounded-[3px] border-2 border-[#363636] bg-linear-to-b from-[#777] to-[#666]">
    {on && <svg width="26" height="29" viewBox="0 0 26 29" className="absolute -top-[5px] -left-[2px]"><path d="M5 14l6 13L22 1l-3 0-7 18-3-7z" fill="#f2f2f2" /></svg>}
  </div>
);

const OptButton = ({ w, children, h = 'h-[37px]' }) => (
  <div className={`${h} shrink-0 flex items-center justify-center rounded-[4px] border-2 border-[#2f2f2f] border-t-[#3f3f3f] bg-linear-to-b from-[#6c6c6c] to-[#5a5a5a] text-[#f0f0f0]`} style={{ width: w }}>{children}</div>
);

const Options = () => (
  <div className="h-[67px] shrink-0 flex items-center bg-linear-to-b from-[#5a5a5a] to-[#4e4e4e] border-t-2 border-[#656565] border-b-2 border-b-[#2f2f2f] text-[21.500px] text-[#f0f0f0]">
    <div className="ml-[13px] w-px h-[38px] border-l-2 border-dotted border-[#232323]" />
    <Ic w={32} h={34} className="ml-[35px]"><circle cx="12" cy="12" r="10" fill="#555" stroke="#c8c8c8" strokeWidth="3" /><path d="M18 19l12 12-3 3-12-12z" /></Ic>
    <Caret className="ml-[17px]" />
    <div className="ml-[12px] w-px h-[50px] bg-[#6a6a6a]" />
    <div className="ml-[14px] w-[48px] h-[50px] rounded-[4px] bg-[#373737] flex items-center justify-center">
      <Ic w={32} h={36}><circle cx="13" cy="13" r="10" fill="none" stroke="#d0d0d0" strokeWidth="3" /><path d="M8 12h10v2H8zM12 8h2v10h-2zM19 20l10 11-3 3-10-11z" /></Ic>
    </div>
    <Ic w={32} h={36} className="ml-[12px]"><circle cx="13" cy="13" r="10" fill="none" stroke="#b8b8b8" strokeWidth="3" /><path d="M8 12h10v2H8zM19 20l10 11-3 3-10-11z" /></Ic>
    <div className="ml-[17px] w-px h-[50px] bg-[#6a6a6a]" />
    <div className="ml-[10px]"><Check on /></div>
    <span className="ml-[9px] w-[218px] whitespace-nowrap">Resize Windows to Fit</span>
    <Check />
    <span className="ml-[9px] w-[186px] whitespace-nowrap">Zoom All Windows</span>
    <Check on />
    <span className="ml-[9px] w-[152px] whitespace-nowrap">Scrubby Zoom</span>
    <OptButton w={101}>100%</OptButton>
    <div className="w-[17px]" />
    <OptButton w={143}>Fit Screen</OptButton>
    <div className="w-[16px]" />
    <OptButton w={146}>Fill Screen</OptButton>
    <div className="ml-auto mr-[15px]">
      <Picker w={245} h="h-[37px]">Frontend</Picker>
    </div>
  </div>
);

export default function App() {
  return (
    <div className={`w-[2880px] h-[1662px] overflow-hidden flex flex-col bg-[#2f2f2f] ${ui}`}>
      <svg className="absolute w-0 h-0">
        <defs>
          <linearGradient id="ig" x1="0" y1="0" x2="0" y2="1">
            <stop offset="0" stopColor="#e4e4e4" />
            <stop offset="1" stopColor="#8c8c8c" />
          </linearGradient>
        </defs>
      </svg>
      <div className="h-[44px] shrink-0 flex items-center relative bg-linear-to-b from-[#6c6c6c] to-[#4f4f4f] border-t-2 border-[#3a3a3a] rounded-t-[10px]">
        <div className="flex gap-[16px] ml-[18px]">
          <div className="w-[24px] h-[24px] rounded-full bg-[#fc5753]" />
          <div className="w-[24px] h-[24px] rounded-full bg-[#fdbc40]" />
          <div className="w-[24px] h-[24px] rounded-full bg-[#33c748]" />
        </div>
        <div className="absolute inset-x-0 pt-[2px] text-center text-[27px] text-[#ededed]">Adobe Photoshop CC 2014</div>
      </div>
      <div className="h-[2px] shrink-0 bg-[#2c2c2c]" />
      <Options />
      <div className="h-[1549px] shrink-0 flex">
        <Tools />
        <Center />
        <div className="w-[6px] shrink-0 bg-[#2b2b2b]" />
        <div className="w-[664px] shrink-0 h-full flex flex-col">
          <div className="h-[25px] shrink-0 flex items-center justify-between bg-[#383838] pl-[54px] pr-[10px]">
            <svg width="14" height="10" viewBox="0 0 14 10"><path d="M5 0L0 5l5 5zM12 0L7 5l5 5z" fill="#bcbcbc" /></svg>
            <svg width="14" height="10" viewBox="0 0 14 10"><path d="M0 0l5 5-5 5zM7 0l5 5-5 5z" fill="#bcbcbc" /></svg>
          </div>
          <div className="flex-1 min-h-0 flex">
            <Dock />
            <div className="w-[6px] shrink-0 bg-[#2f2f2f]" />
            <div className="w-[584px] shrink-0 h-full flex flex-col bg-[#535353]">
              <InfoPanel />
              <CharPanel />
              <LayersPanel />
            </div>
          </div>
        </div>
      </div>
    </div>
  );
}
